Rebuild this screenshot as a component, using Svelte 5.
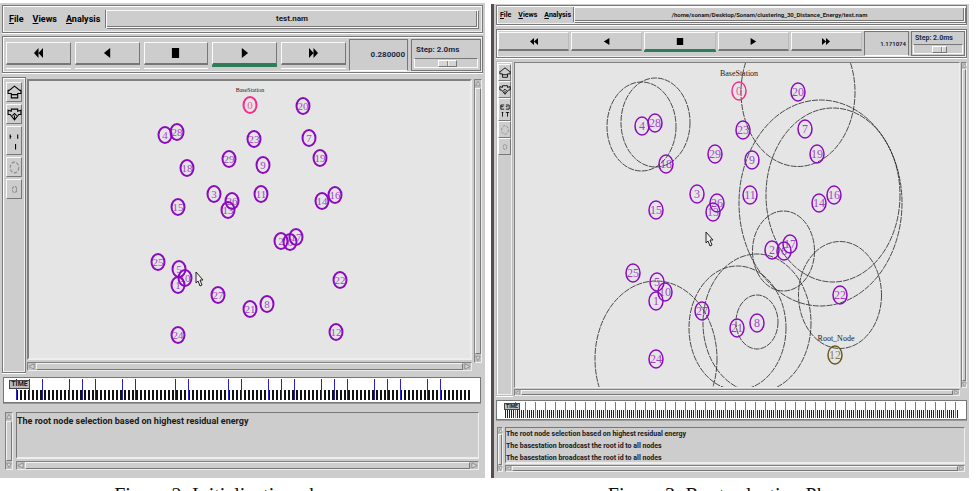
<script>
  const purple = '#8b0abf';
  const pink = '#f0308c';
  const olive = '#6b5a1c';

  const figures = [
    {
      id: 'init',
      title: 'test.nam',
      time: '0.280000',
      viewBox: '29 81 441 277',
      rx: 6.5,
      ry: 8,
      digits: 11,
      edge: 2,
      nodes: [
        [4, 165, 135], [28, 177, 132], [18, 187, 168], [3, 214, 194], [15, 178, 207],
        [25, 158, 262], [5, 179, 269], [1, 178, 285], [10, 185, 278], [24, 178, 335],
        [0, 250, 105, pink], [20, 303, 106], [23, 254, 139], [7, 309, 138], [29, 229, 159],
        [9, 263, 165], [19, 320, 158], [11, 261, 194], [26, 232, 201], [13, 228, 210],
        [14, 322, 201], [16, 335, 195], [2, 281, 241], [6, 290, 242], [17, 296, 237],
        [22, 340, 280], [27, 218, 295], [21, 250, 309], [8, 267, 304], [12, 336, 332]
      ],
      ranges: [],
      labels: [['BaseStation', 250, 92, 6]],
      cursor: [196, 272],
      origin: 4,
      span: 476,
      ticks: { from: 16, to: 468, step: 4, width: 2, top: 12, height: 10, color: '#111' },
      marks: [16, 29, 42, 69, 82, 95, 122, 135, 175, 188, 228, 241, 268, 281, 294, 321, 334, 347, 374, 387, 400, 427, 440],
      log: ['The root node selection based on highest residual energy'],
      caption: 'Figure 2: Initialization phase'
    },
    {
      id: 'root',
      title: '/home/sonam/Desktop/Sonam/clustering_30_Distance_Energy/test.nam',
      time: '1.171074',
      viewBox: '515 63 444 324',
      rx: 7,
      ry: 9,
      digits: 12,
      edge: 1.5,
      nodes: [
        [4, 642, 126], [28, 655, 123], [18, 666, 164], [29, 715, 154], [3, 697, 194],
        [26, 717, 203], [13, 713, 212], [15, 656, 210], [25, 633, 273], [5, 657, 282],
        [10, 665, 292], [1, 656, 301], [24, 656, 359], [27, 702, 311], [0, 739, 91, pink],
        [20, 798, 92], [23, 743, 130], [7, 805, 129], [19, 817, 154], [9, 752, 160],
        [11, 750, 195], [14, 819, 203], [16, 834, 195], [2, 772, 250], [6, 784, 251],
        [17, 790, 244], [22, 840, 295], [8, 757, 323], [21, 737, 328], [12, 835, 355, olive]
      ],
      ranges: [
        [641.5, 126.5, 34.5, 44.5], [655.5, 122.5, 34.5, 44.5], [798, 92, 57, 74.5],
        [820.5, 203, 81.5, 103], [833, 195, 67, 87], [783.5, 251, 31, 40],
        [840, 295, 41.5, 53.5], [757, 322, 21, 27], [757, 323, 54, 69],
        [737.5, 328, 48.5, 62], [656, 359, 61, 78]
      ],
      labels: [['BaseStation', 739, 76, 8], ['Root_Node', 836, 341, 8]],
      cursor: [706, 232],
      origin: 497,
      span: 469,
      ticks: { from: 505, to: 957, step: 2, width: 1, top: 9, height: 8, color: '#222' },
      marks: Array.from({ length: 45 }, (_, i) => 515 + i * 10),
      log: [
        'The root node selection based on highest residual energy',
        'The basestation broadcast the root id to all nodes',
        'The basestation broadcast the root id to all nodes'
      ],
      caption: 'Figure 3: Root selection Phase'
    }
  ];

  const transport = [
    ['Rewind', 'M10 0v10L5 5zM5 0v10L0 5z'],
    ['Play backward', 'M8 0v10L1 5z'],
    ['Stop', 'M1 0h8v10H1z'],
    ['Play', 'M2 0v10l7-5z'],
    ['Fast forward', 'M0 0v10l5-5zM5 0v10l5-5z']
  ];

  const isActive = (fig, i) => (fig.id === 'init' ? i === 3 : i === 2);

  const tickList = (t) =>
    Array.from({ length: Math.floor((t.to - t.from) / t.step) + 1 }, (_, i) => t.from + i * t.step);
</script>

{#snippet bar(dir)}
  <div class="bar {dir}" aria-hidden="true">
    <svg viewBox="0 0 8 8"><path d={dir === 'v' ? 'M1 7L4 1l3 6z' : 'M7 1L1 4l6 3z'} /></svg>
    <span></span>
    <svg viewBox="0 0 8 8"><path d={dir === 'v' ? 'M1 1l3 6 3-6z' : 'M1 1l6 3-6 3z'} /></svg>
  </div>
{/snippet}

<main>
  {#each figures as fig (fig.id)}
    <figure class={fig.id}>
      <div class="window">
        <header class="panel menu">
          <nav>
            <button><u>F</u>ile</button>
            <button><u>V</u>iews</button>
            <button><u>A</u>nalysis</button>
          </nav>
          <div class="title">{fig.title}</div>
        </header>

        <div class="panel tools">
          <div class="transport">
            {#each transport as [name, d], i}
              <button class:on={isActive(fig, i)} aria-label={name}>
                <svg viewBox="0 0 10 10" preserveAspectRatio="none"><path {d} /></svg>
              </button>
            {/each}
          </div>
          <output class="time">{fig.time}</output>
          <div class="step">
            <label for="step-{fig.id}">Step: 2.0ms</label>
            <input id="step-{fig.id}" type="range" min="0" max="100" value="54" />
          </div>
        </div>

        <div class="stage">
          <aside class="panel side">
            <button aria-label="Zoom in">
              <svg viewBox="0 0 14 14"><path d="M7 1l5 4h1v3h-3v4H4V8H1V5h1zM4 9h6" /></svg>
            </button>
            <button aria-label="Zoom out">
              <svg viewBox="0 0 14 14"><path d="M4 2h6v2l3-1v4h-2l-4 5-4-5H1V3l3 1zM5 8l2-2 2 2M7 8v3" /></svg>
            </button>
            <button class="tall" aria-label="Edit">
              {#if fig.id === 'init'}
                <svg viewBox="0 0 14 24"><path d="M3 6v4M3 8h1M10 6v4M8 15v5" /></svg>
              {:else}
                <svg viewBox="0 0 14 24"><path d="M6 6H2v5h4M2 8h3M8 6h4v5H8M8 8h2M4 15v5M3 15h2M8 15h4M10 15v5" /></svg>
              {/if}
            </button>
            <button class="faint" aria-label="Larger nodes">
              <svg viewBox="0 0 14 14"><ellipse cx="7" cy="7" rx="4" ry="5" stroke-dasharray="3 1.5" /></svg>
            </button>
            <button class="faint" aria-label="Smaller nodes">
              <svg viewBox="0 0 14 14"><ellipse cx="7" cy="7" rx="2" ry="3" stroke-dasharray="3 1" /></svg>
            </button>
          </aside>

          <div class="view">
            <div class="canvas">
              <svg viewBox={fig.viewBox}>
                {#each fig.ranges as [cx, cy, rx, ry]}
                  <ellipse class="range" {cx} {cy} {rx} {ry} />
                {/each}
                {#each fig.nodes as [n, x, y, color = purple]}
                  <ellipse cx={x} cy={y} rx={fig.rx} ry={fig.ry} fill="none" stroke={color} stroke-width={fig.edge} />
                  <text class="num" {x} y={y + 4} font-size={fig.digits} fill={color}>{n}</text>
                {/each}
                {#each fig.labels as [text, x, y, size]}
                  <text {x} y={y} font-size={size} fill="#222">{text}</text>
                {/each}
                <path
                  class="cursor"
                  transform="translate({fig.cursor[0]} {fig.cursor[1]})"
                  d="M0 0v11l2-2 2 5 2-1-2-5h3z"
                />
              </svg>
            </div>
            {@render bar('h')}
          </div>
          {@render bar('v')}
        </div>

        <div class="timeline">
          <svg viewBox="{fig.origin} 0 {fig.span} {fig.ticks.top + fig.ticks.height}" preserveAspectRatio="none" shape-rendering="crispEdges">
            {#each tickList(fig.ticks) as x}
              <rect {x} y={fig.ticks.top} width={fig.ticks.width} height={fig.ticks.height} fill={fig.ticks.color} />
            {/each}
            {#each fig.marks as x}
              <rect class="mark" {x} y="1" width="1" height={fig.ticks.top + fig.ticks.height - 1} />
            {/each}
          </svg>
          <span class="knob">TIME</span>
        </div>

        <div class="log">
          {@render bar('v')}
          <div class="logbody">
            <div class="lines">
              {#each fig.log as line}
                <p>{line}</p>
              {/each}
            </div>
            {@render bar('h')}
          </div>
        </div>
      </div>
      <figcaption>{fig.caption}</figcaption>
    </figure>
  {/each}
</main>

<style>
  :global(body) {
    background: #fff;
    overflow: hidden;
  }

  main {
    display: grid;
    grid-template-columns: 485fr 478fr;
    gap: 6px;
    padding: 3px 10px 0 0;
    --dark: #777;
    --light: #fafafa;
    --face: #cdcdcd;
  }

  figure {
    margin: 0;
    min-width: 0;
    font: bold 8px/12px Roboto, 'Liberation Sans', Arial, sans-serif;
    color: #1a1a1a;
  }

  .window {
    box-sizing: border-box;
    display: flex;
    flex-direction: column;
    background: var(--face);
    padding: 2px 2px 8px;
  }

  .root .window {
    margin-top: 1px;
    padding: 1px 2px 6px;
    border-left: 3px solid #5b4a54;
  }

  button {
    box-sizing: border-box;
    border: 0;
    padding: 0;
    background: var(--face);
    font: inherit;
    color: #000;
  }

  .panel {
    box-sizing: border-box;
    border: 1px solid var(--dark);
    box-shadow: inset 1px 1px #fff, inset -1px -1px #eee, 0 1px #fff;
  }

  .menu {
    display: flex;
    height: 28px;
    padding: 4px;
    margin-bottom: 3px;
  }

  nav {
    display: flex;
    gap: 9px;
    width: 99px;
    padding-left: 2px;
    font-size: 9px;
    flex: none;
    box-sizing: border-box;
  }

  .title {
    flex: 1;
    border: 1px solid var(--light);
    box-shadow: inset -1px -1px var(--dark), 1px 1px var(--dark), -1px 0 var(--dark);
    display: flex;
    align-items: center;
    justify-content: center;
    min-width: 0;
    white-space: nowrap;
  }

  .tools {
    display: flex;
    gap: 3px;
    height: 37px;
    padding: 2px 1px 1px 3px;
    margin-bottom: 4px;
  }

  .transport {
    flex: 1;
    display: flex;
    gap: 4px;
    padding-top: 3px;
  }

  .transport button {
    flex: 1;
    height: 23px;
    border: 1px solid var(--light);
    border-right-color: var(--dark);
    border-bottom: 2px solid var(--dark);
    box-shadow: 0 3px var(--face), 0 4px #fff;
    display: flex;
    align-items: center;
    justify-content: center;
  }

  .transport .on {
    border-bottom-color: #2f7d57;
    box-shadow: 0 2px #2f7d57;
  }

  .transport svg {
    width: 9px;
    height: 10px;
  }

  .time {
    box-sizing: border-box;
    width: 59px;
    border: 1px solid var(--dark);
    border-bottom-color: #fff;
    display: flex;
    align-items: center;
    justify-content: flex-end;
    padding-right: 2px;
    color: #1c2a44;
  }

  .step {
    box-sizing: border-box;
    width: 70px;
    border: 1px solid var(--dark);
    display: flex;
    flex-direction: column;
    justify-content: space-between;
    padding: 4px 2px 2px;
    color: #1c2a44;
  }

  .step label {
    padding-left: 2px;
  }

  input[type='range'] {
    appearance: none;
    -webkit-appearance: none;
    box-sizing: border-box;
    width: 100%;
    height: 10px;
    margin: 0;
    background: var(--face);
    border: 1px solid var(--light);
    border-top-color: var(--dark);
  }

  input[type='range']::-webkit-slider-thumb {
    -webkit-appearance: none;
    box-sizing: border-box;
    width: 19px;
    height: 7px;
    border: 1px solid #fff;
    border-right-color: var(--dark);
    border-bottom-color: var(--dark);
    background: linear-gradient(90deg, #d4d4d4 8px, #888 8px 9px, #eee 9px 10px, #d4d4d4 10px);
  }

  .stage {
    display: flex;
    margin-bottom: 4px;
  }

  .side {
    width: 24px;
    display: flex;
    flex-direction: column;
    align-items: center;
    gap: 2px;
    padding-top: 4px;
    margin-right: 1px;
    flex: none;
  }

  .side button {
    width: 16px;
    height: 20px;
    border: 1px solid var(--light);
    border-right-color: var(--dark);
    border-bottom-color: var(--dark);
    flex: none;
    display: flex;
    align-items: center;
    justify-content: center;
  }

  .side .tall {
    height: 29px;
  }

  .side svg {
    width: 15px;
    fill: none;
    stroke: #000;
    flex: none;
  }

  .side .faint svg {
    stroke: #888;
  }

  .view {
    flex: 1;
    min-width: 0;
    display: flex;
    flex-direction: column;
    gap: 2px;
    padding: 2px 0;
  }

  .canvas {
    border: 2px solid #eee;
    border-top-color: #808080;
    border-left-color: #808080;
    background: #e5e5e5;
  }

  .canvas svg {
    display: block;
    width: 100%;
    font-family: 'Liberation Serif', 'Times New Roman', serif;
    font-weight: normal;
    text-anchor: middle;
  }

  .num {
    opacity: 0.75;
  }

  .range {
    fill: none;
    stroke: #222;
    stroke-width: 0.8;
    stroke-dasharray: 6 1;
  }

  .cursor {
    fill: #eee;
    stroke: #222;
  }

  .bar {
    display: flex;
    flex: none;
    gap: 1px;
    box-sizing: border-box;
    background: #c2c2c2;
    border: 1px solid #808080;
    border-bottom-color: #eee;
    border-right-color: #eee;
  }

  .bar span {
    flex: 1;
    background: var(--face);
    border: 1px solid #f4f4f4;
    border-right-color: #777;
    border-bottom-color: #777;
  }

  .bar svg {
    flex: none;
    fill: #d8d8d8;
    stroke: #888;
  }

  .bar.h {
    height: 9px;
  }

  .bar.h svg {
    width: 7px;
    height: 7px;
  }

  .bar.v {
    width: 8px;
    flex-direction: column;
  }

  .bar.v svg {
    width: 6px;
    height: 7px;
  }

  .stage > .bar.v {
    margin: 2px 1px 10px 2px;
  }

  .timeline {
    position: relative;
    box-sizing: border-box;
    height: 26px;
    margin: 0 2px 9px 1px;
    border: 1px solid var(--dark);
    background: #fff;
    box-shadow: 0 1px #999;
  }

  .timeline svg {
    display: block;
    width: 100%;
    height: 22px;
  }

  .mark {
    fill: #2a20c8;
  }

  .knob {
    position: absolute;
    left: 5px;
    top: 2px;
    box-sizing: border-box;
    width: 21px;
    height: 9px;
    overflow: hidden;
    border: 1px solid #444;
    background: #bbb;
    font-size: 7px;
    line-height: 7px;
    text-align: center;
  }

  .log {
    display: flex;
    gap: 3px;
    padding: 0 4px 0 3px;
  }

  .logbody {
    flex: 1;
    min-width: 0;
  }

  .lines {
    box-sizing: border-box;
    height: 47px;
    padding: 2px 0;
    margin-bottom: 2px;
    border: 1px solid var(--dark);
    border-right-color: #eee;
    border-bottom: 2px solid #eee;
  }

  .lines p {
    margin: 0;
    font-size: 9px;
    line-height: 12px;
    white-space: nowrap;
  }

  figcaption {
    padding-top: 6px;
    text-align: center;
    font: 20px/22px 'Liberation Serif', 'Times New Roman', serif;
    color: #111;
    margin-right: 26px;
  }

  /* The second screen is drawn at a slightly smaller scale. */
  .root .menu {
    height: 20px;
    padding: 1px 1px 2px;
    margin-bottom: 4px;
  }

  .root nav {
    width: 76px;
    font-size: 7px;
    gap: 7px;
  }

  .root .title {
    font-size: 6px;
  }

  .root .tools {
    height: 29px;
    padding: 1px;
    gap: 2px;
    margin-bottom: 3px;
  }

  .root .transport {
    gap: 2px;
    padding-top: 1px;
  }

  .root .transport button {
    height: 19px;
    border-right-color: #bbb;
    box-shadow: none;
  }

  .root .transport .on {
    box-shadow: 0 1px #2f7d57;
  }

  .root .transport svg {
    width: 8px;
    height: 7px;
  }

  .root .time {
    width: 45px;
    font-size: 6px;
  }

  .root .step {
    width: 54px;
    font-size: 7px;
    line-height: 8px;
    padding: 2px 1px 1px;
  }

  .root input[type='range']::-webkit-slider-thumb {
    width: 15px;
  }

  .root .side {
    width: 17px;
    padding-top: 2px;
    gap: 0;
    border-color: #bbb;
  }

  .root .side button {
    width: 13px;
    height: 17px;
  }

  .root .side .tall {
    height: 23px;
  }

  .root .side svg {
    width: 12px;
    height: 12px;
  }

  .root .side .tall svg {
    height: 20px;
  }

  .root .view {
    padding: 1px 0 0;
    gap: 1px;
  }

  .root .canvas {
    border-width: 1px;
  }

  .root .bar.h {
    height: 7px;
  }

  .root .bar.v {
    width: 6px;
  }

  .root .bar svg {
    width: 5px;
    height: 5px;
  }

  .root .stage > .bar.v {
    margin: 1px 0 8px 1px;
  }

  .root .timeline {
    height: 20px;
    margin: 0 0 7px;
  }

  .root .timeline svg {
    height: 17px;
  }

  .root .mark {
    fill: #7468e4;
  }

  .root .knob {
    width: 16px;
    height: 7px;
    left: 7px;
    font-size: 5px;
    line-height: 5px;
  }

  .root .log {
    gap: 2px;
    padding: 0 2px 0 1px;
  }

  .root .lines {
    height: 37px;
    margin-bottom: 1px;
    padding: 0;
  }

  .root .lines p {
    font-size: 7px;
  }

  .root figcaption {
    margin: 0;
  }
</style>
